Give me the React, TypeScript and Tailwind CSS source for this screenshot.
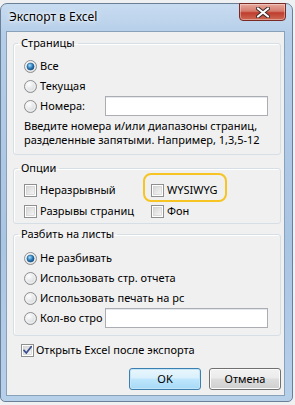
import React from 'react';

const font = "font-['Noto_Sans','Open_Sans',sans-serif]";

function Radio({ checked }: { checked?: boolean }) {
  return (
    <svg width="13" height="13" viewBox="0 0 13 13" className="shrink-0">
      <defs>
        <radialGradient id="rb" cx="0.35" cy="0.3" r="0.8">
          <stop offset="0" stopColor="#ffffff" />
          <stop offset="1" stopColor="#cfd1d3" />
        </radialGradient>
        <radialGradient id="rd" cx="0.4" cy="0.35" r="0.7">
          <stop offset="0" stopColor="#a9def9" />
          <stop offset="0.55" stopColor="#2b7fc0" />
          <stop offset="1" stopColor="#0f4778" />
        </radialGradient>
      </defs>
      <circle cx="6.5" cy="6.5" r="6" fill="url(#rb)" stroke="#8c8e90" />
      <circle cx="6.5" cy="6.5" r="4.5" fill="none" stroke="#f4f4f4" strokeWidth="1" />
      {checked && <circle cx="6.5" cy="6.5" r="3.6" fill="url(#rd)" stroke="#1d4f7a" strokeWidth="0.5" />}
    </svg>
  );
}

function Check({ checked }: { checked?: boolean }) {
  return (
    <svg width="13" height="13" viewBox="0 0 13 13" className="shrink-0">
      <defs>
        <linearGradient id="cb" x1="0" y1="0" x2="1" y2="1">
          <stop offset="0" stopColor="#d6d6d6" />
          <stop offset="1" stopColor="#f6f6f6" />
        </linearGradient>
      </defs>
      <rect x="0.5" y="0.5" width="12" height="12" fill="#ffffff" stroke="#8e8f8f" />
      <rect x="2.5" y="2.5" width="8" height="8" fill="url(#cb)" stroke="#c8c8c8" strokeWidth="0.6" />
      {checked && (
        <path d="M3 6.4 L5.3 9 L10.2 2.8" fill="none" stroke="#3c4f8f" strokeWidth="1.8" strokeLinecap="round" strokeLinejoin="round" />
      )}
    </svg>
  );
}

function Group({ title, children, className = '' }: { title: string; children: React.ReactNode; className?: string }) {
  return (
    <fieldset className={`w-[268px] border border-[#d5dfe5] rounded-[3px] shadow-[inset_1px_1px_0_#ffffff] ${className}`}>
      <legend className="ml-[4px] px-[3px] h-[16px] leading-[16px]">{title}</legend>
      {children}
    </fieldset>
  );
}

function TextBox() {
  return <div className="h-[20px] w-[163px] bg-white border border-[#abadb3] shadow-[inset_0_1px_0_#e3e9ef]" />;
}

export default function App() {
  return (
    <div className={`w-[295px] h-[405px] overflow-hidden bg-[#eef0f2] text-[11px] text-black ${font}`}>
      <div className="mt-[3px] w-[293px] h-[399px] rounded-t-[7px] rounded-b-[5px] border border-[#6b7f96] bg-[linear-gradient(180deg,#c8dcf1_0%,#b4cde8_8%,#a9c5e4_60%,#b7d0ea_100%)] flex flex-col">
        <div className="h-[27px] flex items-start justify-between pl-[8px] pr-[6px]">
          <span className="mt-[5px] leading-[16px] text-[12px] [text-shadow:0_0_6px_#ffffff,0_0_3px_#ffffff]">Экспорт в Excel</span>
          <div className="mt-[-1px] w-[47px] h-[18px] rounded-b-[4px] border border-[#7a2a24] bg-[linear-gradient(180deg,#e8a89c_0%,#d47b6c_45%,#bf3d2d_55%,#cd6a55_100%)] flex items-center justify-center shadow-[inset_0_0_0_1px_rgba(255,255,255,0.35)]">
            <svg width="14" height="11" viewBox="0 0 14 11">
              <path d="M2 1.5 L12 9.5 M12 1.5 L2 9.5" stroke="#3a2a2a" strokeWidth="4" strokeLinecap="round" />
              <path d="M2 1.5 L12 9.5 M12 1.5 L2 9.5" stroke="#ffffff" strokeWidth="2.2" strokeLinecap="round" />
            </svg>
          </div>
        </div>
        <div className="ml-[5px] w-[279px] h-[365px] border border-[#8aa1ba] bg-[#f0f0f0] flex flex-col pl-[6px] pt-[3px]">
          <Group title="Страницы" className="pb-[7px]">
            <div className="mt-[5px] pl-[10px] flex flex-col">
              <div className="h-[20px] flex items-center gap-[3px]">
                <Radio checked />
                <span>Все</span>
              </div>
              <div className="h-[20px] flex items-center gap-[3px]">
                <Radio />
                <span>Текущая</span>
              </div>
              <div className="h-[20px] flex items-center">
                <div className="w-[81px] flex items-center gap-[3px]">
                  <Radio />
                  <span>Номера:</span>
                </div>
                <TextBox />
              </div>
              <p className="mt-[3px] leading-[14px]">
                Введите номера и/или диапазоны страниц,
                <br />
                разделенные запятыми. Например, 1,3,5-12
              </p>
            </div>
          </Group>
          <Group title="Опции" className="mt-[5px] pb-[2px]">
            <div className="mt-[4px] pl-[10px] grid grid-cols-[127px_1fr] gap-y-[1px]">
              <div className="h-[20px] flex items-center gap-[3px]">
                <Check />
                <span>Неразрывный</span>
              </div>
              <div className="relative h-[20px] flex items-center gap-[3px]">
                <div className="absolute left-[-8px] top-[-7px] w-[84px] h-[29px] rounded-[8px] border-[2.5px] border-[#f6c423]" />
                <Check />
                <span>WYSIWYG</span>
              </div>
              <div className="h-[20px] flex items-center gap-[3px]">
                <Check />
                <span>Разрывы страниц</span>
              </div>
              <div className="h-[20px] flex items-center gap-[3px]">
                <Check />
                <span>Фон</span>
              </div>
            </div>
          </Group>
          <Group title="Разбить на листы" className="mt-[2px] pb-[7px]">
            <div className="mt-[6px] pl-[10px] flex flex-col">
              <div className="h-[20px] flex items-center gap-[3px]">
                <Radio checked />
                <span>Не разбивать</span>
              </div>
              <div className="h-[20px] flex items-center gap-[3px]">
                <Radio />
                <span>Использовать стр. отчета</span>
              </div>
              <div className="h-[20px] flex items-center gap-[3px]">
                <Radio />
                <span className="whitespace-nowrap">Использовать печать на рс</span>
              </div>
              <div className="h-[20px] flex items-center">
                <div className="w-[81px] flex items-center gap-[3px]">
                  <Radio />
                  <span className="whitespace-nowrap">Кол-во стро</span>
                </div>
                <TextBox />
              </div>
            </div>
          </Group>
          <div className="mt-[4px] ml-[8px] h-[20px] flex items-center gap-[2px]">
            <Check checked />
            <span>Открыть Excel после экспорта</span>
          </div>
          <div className="mt-[8px] w-[268px] flex justify-end gap-[8px]">
            <button className="w-[72px] h-[22px] rounded-[3px] border border-[#3c7fb1] bg-[linear-gradient(180deg,#eaf6fd_0%,#d9f0fc_45%,#bee6fd_50%,#a7d9f5_100%)] shadow-[inset_0_0_0_1px_#c4e5f6] text-[11px]">
              OK
            </button>
            <button className="w-[72px] h-[22px] rounded-[3px] border border-[#707070] bg-[linear-gradient(180deg,#f2f2f2_0%,#ebebeb_45%,#dddddd_50%,#cfcfcf_100%)] shadow-[inset_0_0_0_1px_#fcfcfc] text-[11px]">
              Отмена
            </button>
          </div>
        </div>
      </div>
    </div>
  );
}
